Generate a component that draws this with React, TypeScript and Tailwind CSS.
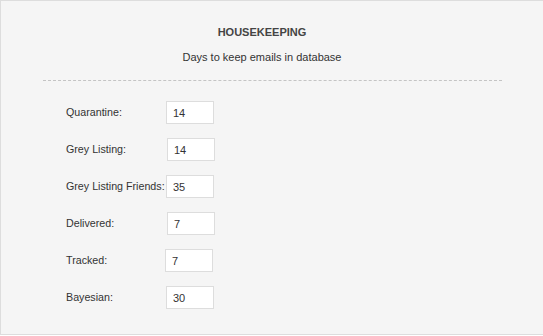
import * as React from 'react';

interface Field {
  label: string;
  value: string;
  offset: string;
}

const fields: Field[] = [
  { label: 'Quarantine:', value: '14', offset: 'ml-0' },
  { label: 'Grey Listing:', value: '14', offset: 'ml-[1px]' },
  { label: 'Grey Listing Friends:', value: '35', offset: 'ml-0' },
  { label: 'Delivered:', value: '7', offset: 'ml-[1px]' },
  { label: 'Tracked:', value: '7', offset: '-ml-[1px]' },
  { label: 'Bayesian:', value: '30', offset: 'ml-0' },
];

export default function App(): React.ReactElement {
  return (
    <div
      className="w-full h-[335px] bg-[#f5f5f5] border-t border-l border-b border-[#dddddd] text-[11px] leading-[13px] text-[#333333]"
      style={{ fontFamily: '"Liberation Sans", Arial, sans-serif' }}
    >
      {/* Header */}
      <div className="pt-[25px] pr-[20px] text-center">
        <div className="font-bold text-[#444444]">HOUSEKEEPING</div>
        <div className="mt-[12px]">Days to keep emails in database</div>
      </div>

      <div className="mt-[16px] ml-[42px] w-[459px] border-t border-dashed border-[#c4c4c4]" />

      {/* Fields */}
      <div className="mt-[20px] pl-[65px] flex flex-col gap-[14px]">
        {fields.map((f) => (
          <div key={f.label} className="flex items-center">
            <div className="w-[100px] shrink-0 whitespace-nowrap text-[10.7px]">{f.label}</div>
            <input
              readOnly
              value={f.value}
              className={`${f.offset} w-[48px] h-[23px] bg-white border border-[#dddddd] pl-[6px] text-[11px] text-[#333333] outline-none`}
            />
          </div>
        ))}
      </div>
    </div>
  );
}
